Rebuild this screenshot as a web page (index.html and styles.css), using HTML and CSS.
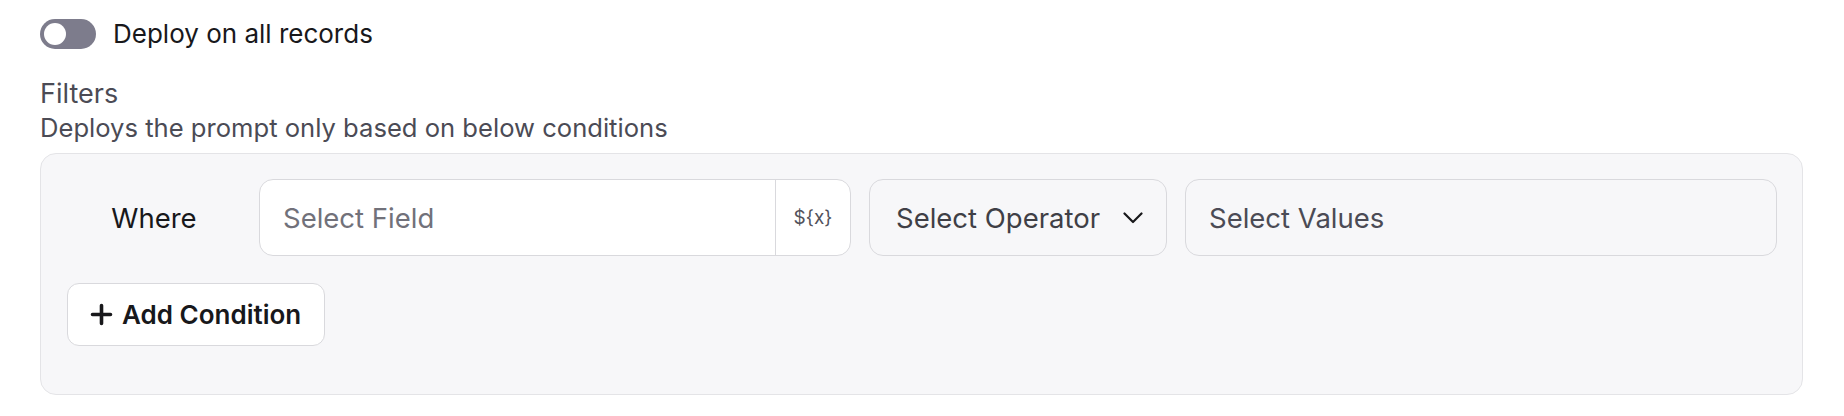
FILE: index.html
```html
<!DOCTYPE html>
<html lang="en">
<head>
<meta charset="utf-8">
<title>Deploy filters</title>
<link rel="stylesheet" href="styles.css">
</head>
<body>
<div class="page">
  <label class="toggle-row">
    <span class="toggle"><span class="knob"></span></span>
    <span class="toggle-label">Deploy on all records</span>
  </label>

  <div class="section-head">
    <div class="section-title">Filters</div>
    <div class="section-desc">Deploys the prompt only based on below conditions</div>
  </div>

  <div class="panel">
    <div class="cond-row">
      <div class="where">Where</div>
      <div class="field">
        <span class="field-input">Select Field</span>
        <span class="field-addon">${x}</span>
      </div>
      <div class="select">
        <span class="select-text">Select Operator</span>
        <svg class="chevron" width="20" height="12" viewBox="0 0 20 12" aria-hidden="true">
          <path d="M1.5 1.5 L10 10 L18.5 1.5" fill="none" stroke="#18181b" stroke-width="2.2" stroke-linecap="round" stroke-linejoin="round"/>
        </svg>
      </div>
      <div class="select values">
        <span class="select-text">Select Values</span>
      </div>
    </div>
    <button class="add-btn" type="button">
      <svg class="plus" width="23" height="23" viewBox="0 0 23 23" aria-hidden="true">
        <path d="M11.5 2.5 V20.5 M2.5 11.5 H20.5" fill="none" stroke="#18181b" stroke-width="3.6" stroke-linecap="round"/>
      </svg>
      <span>Add Condition</span>
    </button>
  </div>
</div>
</body>
</html>
```

FILE: styles.css
```css
* { box-sizing: border-box; }

html, body {
  margin: 0;
  background: #ffffff;
}

body {
  font-family: Inter, "Noto Sans", "Liberation Sans", sans-serif;
  font-size: 26px;
  color: #18181b;
}

.page {
  padding: 19px 41px 0 40px;
}

.toggle-row {
  display: flex;
  align-items: center;
  gap: 17px;
  height: 30px;
}

.toggle {
  display: flex;
  align-items: center;
  width: 56px;
  height: 30px;
  border-radius: 15px;
  background: #7d7c8c;
  padding: 0 4px;
}

.knob {
  width: 22px;
  height: 22px;
  border-radius: 50%;
  background: #ffffff;
}

.toggle-label {
  color: #18181b;
  line-height: 30px;
  font-size: 26px;
}

.section-head {
  margin-top: 28px;
  display: flex;
  flex-direction: column;
}

.section-title,
.section-desc {
  line-height: 34px;
  color: #4b4b55;
}

.section-title {
  font-size: 27px;
}

.section-desc {
  font-size: 25.6px;
}

.panel {
  margin-top: 8px;
  border: 1px solid #e4e4e7;
  border-radius: 16px;
  background: #f7f7f9;
  padding: 25px 25px 48px 26px;
  display: flex;
  flex-direction: column;
  align-items: flex-start;
  gap: 27px;
}

.cond-row {
  width: 100%;
  display: grid;
  grid-template-columns: 174px 1fr 298px 1fr;
  gap: 18px;
  height: 77px;
  font-size: 27.5px;
}

.where {
  display: flex;
  align-items: center;
  justify-content: center;
  color: #18181b;
}

.field {
  display: flex;
  background: #ffffff;
  border: 1px solid #d9d9dd;
  border-radius: 14px;
  overflow: hidden;
}

.field-input {
  flex: 1;
  display: flex;
  align-items: center;
  padding-left: 23px;
  color: #71717a;
}

.field-addon {
  width: 75px;
  display: flex;
  align-items: center;
  justify-content: center;
  border-left: 1px solid #d9d9dd;
  font-size: 19px;
  color: #52525b;
}

.select {
  display: flex;
  align-items: center;
  justify-content: space-between;
  border: 1px solid #d9d9dd;
  border-radius: 14px;
  padding: 0 23px 0 26px;
}

.select-text {
  color: #3f3f46;
}

.values {
  padding-left: 23px;
}

.values .select-text {
  color: #4b4b55;
}

.chevron {
  display: block;
}

.add-btn {
  display: flex;
  align-items: center;
  gap: 9px;
  height: 63px;
  padding: 0 23px 0 22px;
  background: #ffffff;
  border: 1px solid #d9d9dd;
  border-radius: 12px;
  font-family: inherit;
  font-size: 26px;
  font-weight: 600;
  color: #18181b;
}

.plus {
  display: block;
}
```
